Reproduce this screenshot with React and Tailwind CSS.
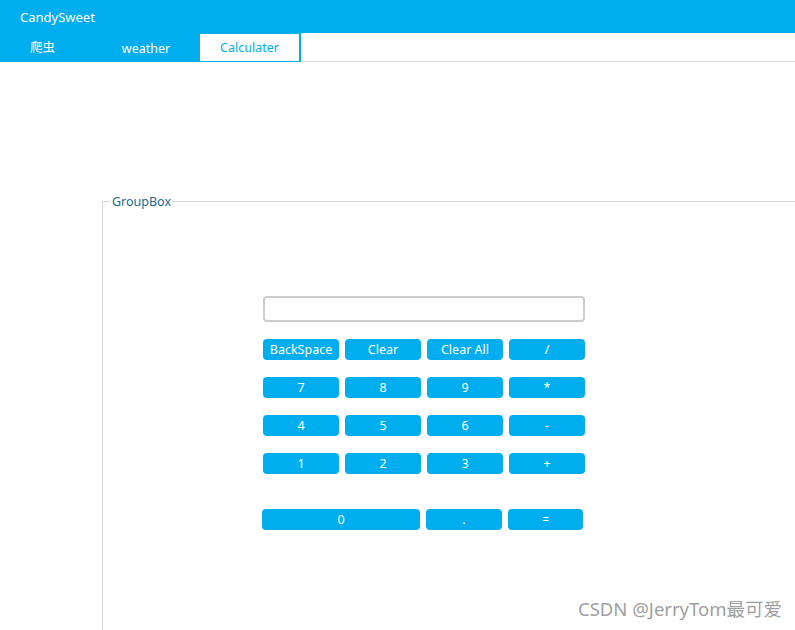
export default function App() {
  const font = { fontFamily: '"Noto Sans", "Noto Sans CJK SC", sans-serif' };
  const rows = [
    ["BackSpace", "Clear", "Clear All", "/"],
    ["7", "8", "9", "*"],
    ["4", "5", "6", "-"],
    ["1", "2", "3", "+"],
  ];
  const btn =
    "h-[21px] rounded-[4px] bg-[#00aeef] text-white text-[12.5px] leading-[21px] flex items-center justify-center";
  return (
    <div className="w-[795px] h-[630px] bg-white relative overflow-hidden" style={font}>
      <div className="h-[33px] bg-[#00aeef] flex items-center pl-[20px] pt-[2px]">
        <span className="text-white text-[13px]">CandySweet</span>
      </div>
      <div className="h-[29px] flex">
        <div className="w-[93px] bg-[#00aeef] flex items-center justify-start pl-[30px] text-white text-[12.5px] pt-[2px]">
          爬虫
        </div>
        <div className="w-[106px] bg-[#00aeef] flex items-center justify-center text-white text-[12.5px] pt-[3px]">
          weather
        </div>
        <div className="w-[102px] bg-[#00aeef] p-[1px] pl-[1px] pr-[2px] pb-[1px]">
          <div className="h-full bg-white flex items-center justify-center text-[#00aeef] text-[12.5px] pt-[1px]">
            Calculater
          </div>
        </div>
        <div className="flex-1 border-b border-[#d9d9d9]" />
      </div>
      <div className="pt-[139px] pl-[102px]">
        <div className="relative border-l border-t border-[#d5d5d5] h-[440px]">
          <span className="absolute left-[7px] top-[-9px] bg-white px-[2px] text-[12.5px] leading-[18px] text-[#1c6a8c]">
            GroupBox
          </span>
          <div className="pl-[160px] pt-[94px] w-[483px] box-content">
            <div className="w-[322px] h-[26px] border-2 border-[#cccccc] rounded-[4px]" />
            <div className="mt-[17px] flex flex-col gap-[17px]">
              {rows.map((r, i) => (
                <div key={i} className="grid grid-cols-[76px_76px_76px_76px] gap-[6px]">
                  {r.map((t) => (
                    <div key={t} className={btn}>
                      {t}
                    </div>
                  ))}
                </div>
              ))}
            </div>
            <div className="mt-[35px] -ml-[1px] grid grid-cols-[158px_76px_75px] gap-[6px]">
              <div className={btn}>0</div>
              <div className={btn}>.</div>
              <div className={btn}>=</div>
            </div>
          </div>
        </div>
      </div>
      <div className="absolute left-[578px] top-[595px] text-[18.5px] text-[#a0a0a0] leading-[28px]">
        CSDN @JerryTom最可爱
      </div>
    </div>
  );
}
